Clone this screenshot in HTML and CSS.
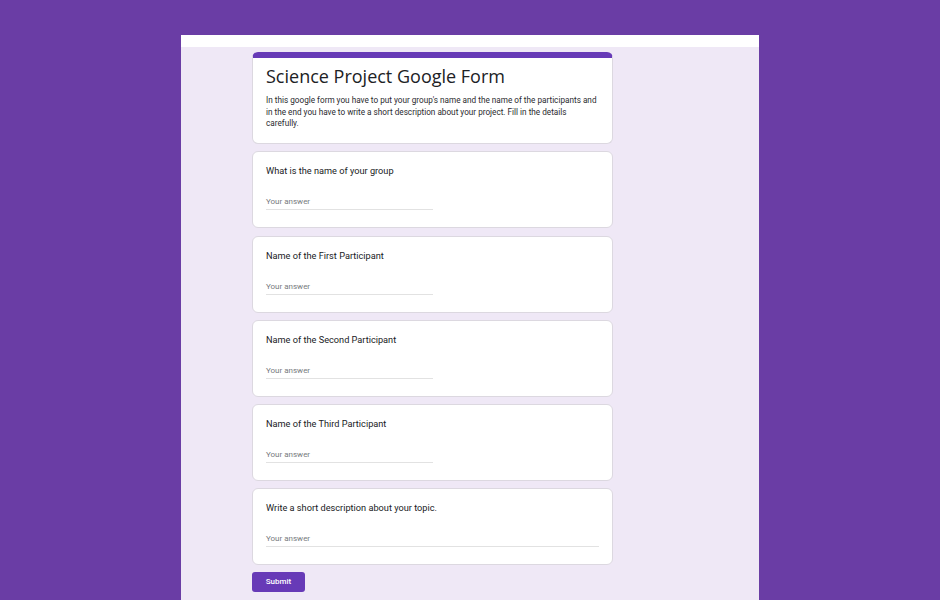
FILE: index.html
```html
<!DOCTYPE html>
<html>
<head>
<meta charset="utf-8">
<link rel="stylesheet" href="styles.css">
</head>
<body>
<div class="panel">
  <div class="column">
    <div class="card header">
      <h1 class="title">Science Project Google Form</h1>
      <p class="desc">In this google form you have to put your group's name and the name of the participants and in the end you have to write a short description about your project. Fill in the details carefully.</p>
    </div>
    <div class="card question">
      <div class="qtext">What is the name of your group</div>
      <div class="answer">Your answer</div>
    </div>
    <div class="card question">
      <div class="qtext">Name of the First Participant</div>
      <div class="answer">Your answer</div>
    </div>
    <div class="card question">
      <div class="qtext">Name of the Second Participant</div>
      <div class="answer">Your answer</div>
    </div>
    <div class="card question">
      <div class="qtext">Name of the Third Participant</div>
      <div class="answer">Your answer</div>
    </div>
    <div class="card question">
      <div class="qtext">Write a short description about your topic.</div>
      <div class="answer long">Your answer</div>
    </div>
    <button class="submit">Submit</button>
  </div>
</div>
</body>
</html>
```

FILE: styles.css
```css
html, body {
  margin: 0;
  padding: 0;
  background: #6a3da5;
  font-family: Roboto, "Liberation Sans", sans-serif;
  overflow: hidden;
}
.panel {
  margin: 35px 0 0 181px;
  width: 578px;
  height: 565px;
  background: #efe8f6;
  border-top: 12px solid #ffffff;
  box-sizing: border-box;
}
.column {
  margin-left: 71px;
  width: 361px;
  padding-top: 5px;
  display: flex;
  flex-direction: column;
  gap: 7.3px;
}
.card {
  background: #ffffff;
  border: 1px solid #dcd8e0;
  border-radius: 6px;
  box-sizing: border-box;
  padding: 0 13px;
}
.header {
  border-top: 6px solid #673ab7;
  height: 92px;
  padding-top: 6px;
}
.title {
  margin: 0;
  font-family: "Open Sans", Roboto, sans-serif;
  font-weight: 400;
  font-size: 18px;
  line-height: 24px;
  color: #202124;
}
.desc {
  margin: 7px 0 0;
  font-size: 8.2px;
  line-height: 11.5px;
  color: #2a2a2e;
}
.question {
  height: 77px;
  padding-top: 13px;
}
.qtext {
  font-size: 9.2px;
  line-height: 12px;
  color: #202124;
}
.answer {
  margin-top: 20px;
  width: 167px;
  font-size: 8px;
  line-height: 10px;
  color: #777a7e;
  padding-bottom: 2px;
  border-bottom: 1px solid #e2e2e2;
}
.answer.long {
  width: auto;
}
.submit {
  align-self: flex-start;
  margin-top: -1px;
  width: 53px;
  height: 20px;
  background: #673ab7;
  color: #ffffff;
  border: none;
  border-radius: 3px;
  font-family: Roboto, "Liberation Sans", sans-serif;
  font-weight: 500;
  font-size: 8px;
  padding: 0;
}
```
